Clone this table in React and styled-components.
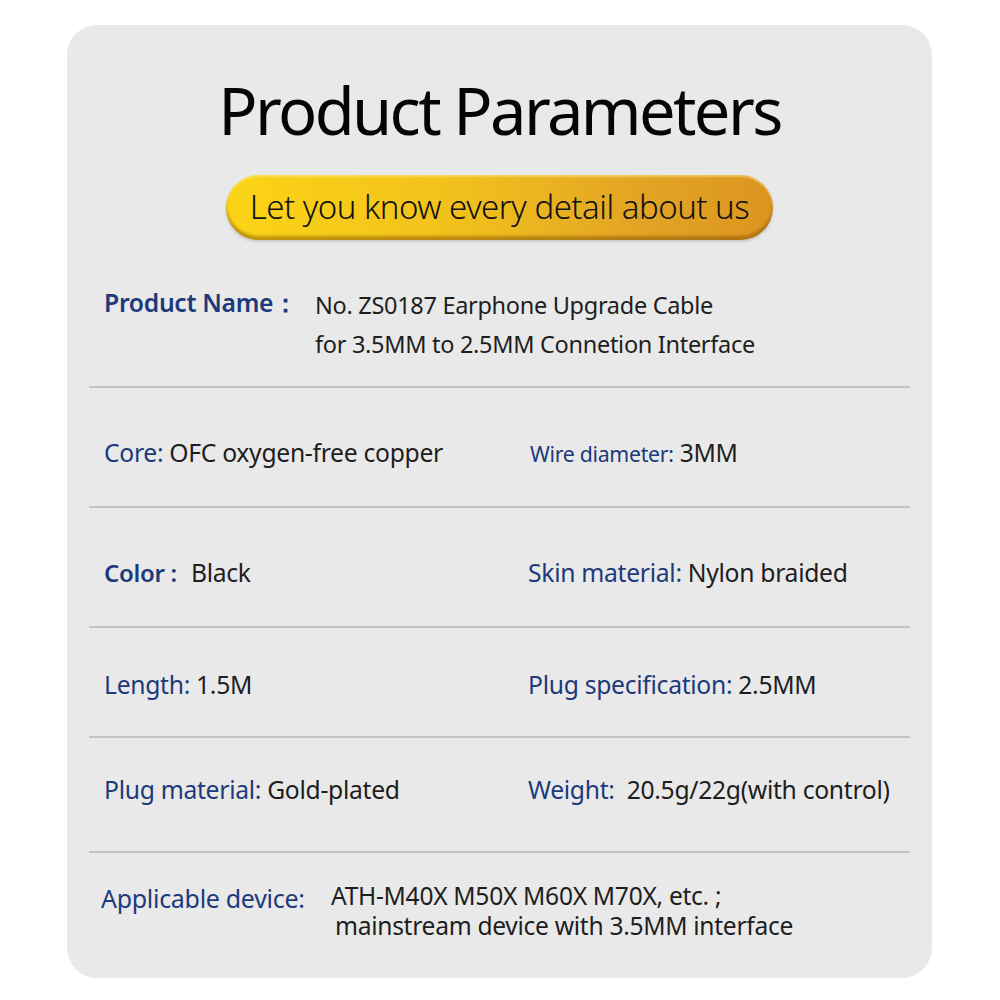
import React from "react"
import styled, { createGlobalStyle } from "styled-components"

const Global = createGlobalStyle`
  html, body {
    margin: 0;
    padding: 0;
    background: #ffffff;
    font-family: "Noto Sans", "Open Sans", sans-serif;
  }
`

const Page = styled.div`
  width: 1000px;
  height: 1000px;
  padding: 25px 68px 22px 67px;
  box-sizing: border-box;
`

const Card = styled.div`
  height: 100%;
  background: #e9e9e9;
  border-radius: 30px;
  display: flex;
  flex-direction: column;
  align-items: center;
`

const Title = styled.h1`
  margin: 45px 0 0;
  font-size: 65px;
  line-height: 80px;
  height: 80px;
  font-weight: 400;
  color: #050505;
  letter-spacing: -2.6px;
`

const Pill = styled.div`
  margin-top: 25px;
  width: 547px;
  height: 65px;
  border-radius: 33px;
  background: linear-gradient(90deg, #fbd416 0%, #f2c21c 40%, #e3a524 75%, #db951f 100%);
  box-shadow: inset 0 -4px 3px rgba(120, 70, 0, 0.45), inset 0 2px 2px rgba(255, 240, 150, 0.5),
    0 2px 3px rgba(0, 0, 0, 0.15);
  display: flex;
  align-items: center;
  justify-content: center;
  font-size: 33px;
  font-weight: 300;
  color: #111;
  letter-spacing: -0.5px;
  padding-bottom: 3px;
  box-sizing: border-box;
`

const Table = styled.div`
  align-self: stretch;
  margin: 0 22px;
`

const Row = styled.div`
  height: ${(p) => p.$h}px;
  padding-top: ${(p) => p.$pt}px;
  box-sizing: border-box;
  border-top: ${(p) => (p.$first ? "none" : "2px solid #c3c3c3")};
  display: grid;
  grid-template-columns: ${(p) => p.$cols || "424px 1fr"};
  padding-left: ${(p) => p.$pl || 15}px;
  align-items: start;
`

const Cell = styled.div`
  display: flex;
  align-items: baseline;
  line-height: 34px;
  white-space: nowrap;
`

const Label = styled.span`
  color: #1c3a7c;
  font-size: ${(p) => p.$size || 24.7}px;
  font-weight: ${(p) => p.$weight || 400};
  letter-spacing: -0.3px;
  margin-right: ${(p) => p.$gap || 6}px;
`

const Value = styled.span`
  color: #1e1e1e;
  font-size: ${(p) => p.$size || 24.7}px;
  letter-spacing: -0.3px;
`

const Lines = styled.div`
  color: #1e1e1e;
  font-size: ${(p) => p.$size || 23.5}px;
  line-height: ${(p) => p.$lh || 39}px;
  letter-spacing: -0.3px;
  white-space: nowrap;
`

const Indent = styled.div`
  padding-left: ${(p) => p.$pl || 0}px;
`

const specs = [
  {
    h: 120,
    pt: 48,
    left: ["Core:", "OFC oxygen-free copper"],
    right: ["Wire diameter:", "3MM", 21.3, 400, 6, 2],
  },
  {
    h: 120,
    pt: 48,
    left: ["Color\u00a0:", "Black", 24, 600, 14],
    right: ["Skin material:", "Nylon braided"],
  },
  {
    h: 110,
    pt: 40,
    left: ["Length:", "1.5M"],
    right: ["Plug specification:", "2.5MM"],
  },
  {
    h: 115,
    pt: 35,
    left: ["Plug material:", "Gold-plated"],
    right: ["Weight:", "20.5g/22g(with control)", 24.7, 400, 12],
  },
]

const Spec = ({ item }) => (
  <Cell style={item[5] ? { paddingLeft: item[5] } : undefined}>
    <Label $size={item[2]} $weight={item[3]} $gap={item[4]}>
      {item[0]}
    </Label>
    <Value>{item[1]}</Value>
  </Cell>
)

const App = () => (
  <Page>
    <Global />
    <Card>
      <Title>Product Parameters</Title>
      <Pill>Let you know every detail about us</Pill>
      <Table>
        <Row $first $h={146} $pt={46} $cols="211px 1fr">
          <Cell>
            <Label $weight={600}>Product Name：</Label>
          </Cell>
          <Lines>
            No. ZS0187 Earphone Upgrade Cable
            <br />
            for 3.5MM to 2.5MM Connetion Interface
          </Lines>
        </Row>
        {specs.map((s, i) => (
          <Row key={i} $h={s.h} $pt={s.pt}>
            <Spec item={s.left} />
            <Spec item={s.right} />
          </Row>
        ))}
        <Row $h={127} $pt={28} $pl={12} $cols="230px 1fr">
          <Cell>
            <Label $size={25}>Applicable device:</Label>
          </Cell>
          <Lines $lh={30} $size={24.6}>
            ATH-M40X M50X M60X M70X, etc. ;
            <Indent $pl={4}>mainstream device with 3.5MM interface</Indent>
          </Lines>
        </Row>
      </Table>
    </Card>
  </Page>
)

export default App
